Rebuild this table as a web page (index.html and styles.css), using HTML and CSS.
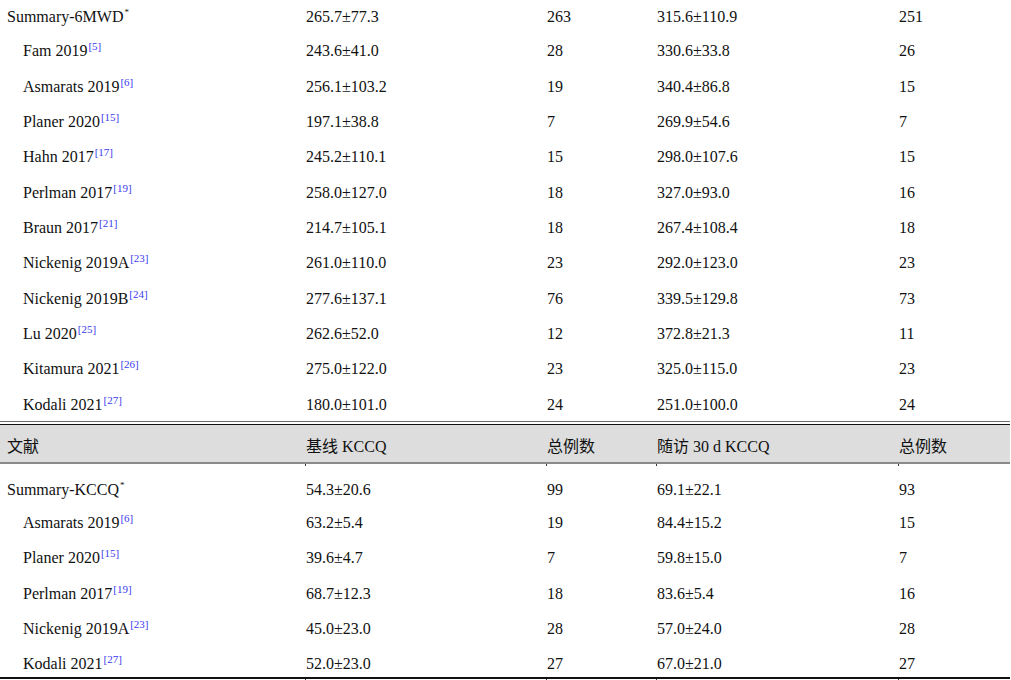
FILE: index.html
```html
<!DOCTYPE html>
<html lang="zh">
<head>
<meta charset="utf-8">
<link rel="stylesheet" href="styles.css">
</head>
<body>
<div class="page">
  <div class="section top">
    <div class="row"><div class="c1">Summary-6MWD<sup class="ast">*</sup></div><div>265.7±77.3</div><div>263</div><div>315.6±110.9</div><div>251</div></div>
    <div class="row"><div class="c1 sub">Fam 2019<sup>[5]</sup></div><div>243.6±41.0</div><div>28</div><div>330.6±33.8</div><div>26</div></div>
    <div class="row"><div class="c1 sub">Asmarats 2019<sup>[6]</sup></div><div>256.1±103.2</div><div>19</div><div>340.4±86.8</div><div>15</div></div>
    <div class="row"><div class="c1 sub">Planer 2020<sup>[15]</sup></div><div>197.1±38.8</div><div>7</div><div>269.9±54.6</div><div>7</div></div>
    <div class="row"><div class="c1 sub">Hahn 2017<sup>[17]</sup></div><div>245.2±110.1</div><div>15</div><div>298.0±107.6</div><div>15</div></div>
    <div class="row"><div class="c1 sub">Perlman 2017<sup>[19]</sup></div><div>258.0±127.0</div><div>18</div><div>327.0±93.0</div><div>16</div></div>
    <div class="row"><div class="c1 sub">Braun 2017<sup>[21]</sup></div><div>214.7±105.1</div><div>18</div><div>267.4±108.4</div><div>18</div></div>
    <div class="row"><div class="c1 sub">Nickenig 2019A<sup>[23]</sup></div><div>261.0±110.0</div><div>23</div><div>292.0±123.0</div><div>23</div></div>
    <div class="row"><div class="c1 sub">Nickenig 2019B<sup>[24]</sup></div><div>277.6±137.1</div><div>76</div><div>339.5±129.8</div><div>73</div></div>
    <div class="row"><div class="c1 sub">Lu 2020<sup>[25]</sup></div><div>262.6±52.0</div><div>12</div><div>372.8±21.3</div><div>11</div></div>
    <div class="row"><div class="c1 sub">Kitamura 2021<sup>[26]</sup></div><div>275.0±122.0</div><div>23</div><div>325.0±115.0</div><div>23</div></div>
    <div class="row"><div class="c1 sub">Kodali 2021<sup>[27]</sup></div><div>180.0±101.0</div><div>24</div><div>251.0±100.0</div><div>24</div></div>
  </div>
  <div class="section bottom">
    <div class="row head"><div class="c1">文献</div><div>基线 KCCQ</div><div>总例数</div><div>随访 30 d KCCQ</div><div>总例数</div></div>
    <div class="ticks head-ticks"><div></div><div></div><div></div><div></div><div></div></div>
    <div class="row first"><div class="c1">Summary-KCCQ<sup class="ast">*</sup></div><div>54.3±20.6</div><div>99</div><div>69.1±22.1</div><div>93</div></div>
    <div class="row"><div class="c1 sub">Asmarats 2019<sup>[6]</sup></div><div>63.2±5.4</div><div>19</div><div>84.4±15.2</div><div>15</div></div>
    <div class="row"><div class="c1 sub">Planer 2020<sup>[15]</sup></div><div>39.6±4.7</div><div>7</div><div>59.8±15.0</div><div>7</div></div>
    <div class="row"><div class="c1 sub">Perlman 2017<sup>[19]</sup></div><div>68.7±12.3</div><div>18</div><div>83.6±5.4</div><div>16</div></div>
    <div class="row"><div class="c1 sub">Nickenig 2019A<sup>[23]</sup></div><div>45.0±23.0</div><div>28</div><div>57.0±24.0</div><div>28</div></div>
    <div class="row last"><div class="c1 sub">Kodali 2021<sup>[27]</sup></div><div>52.0±23.0</div><div>27</div><div>67.0±21.0</div><div>27</div></div>
    <div class="ticks end-ticks"><div></div><div></div><div></div><div></div><div></div></div>
  </div>
</div>
</body>
</html>
```
FILE: styles.css
```css
html, body {
  margin: 0;
  padding: 0;
  background: #ffffff;
}
body {
  font-family: "Liberation Serif", "Noto Sans CJK SC", serif;
  font-size: 16px;
  color: #111111;
  overflow: hidden;
  height: 680px;
}
.page {
  width: 1010px;
}
.row, .ticks {
  display: grid;
  grid-template-columns: 305px 241px 110px 242px 112px;
}
.row > div {
  padding-left: 1px;
  white-space: nowrap;
}
.row > .c1 {
  padding-left: 7px;
}
.row > .c1.sub {
  padding-left: 23px;
}
.section.top {
  margin-top: -2px;
  border-bottom: 1px solid #6e6e6e;
}
.section.top .row {
  height: 35.33px;
  box-sizing: border-box;
  padding-top: 10px;
  line-height: 17px;
}
.section.top .row:first-child {
  height: 34.33px;
}
.section.bottom {
  margin-top: 2px;
}
.row.head {
  background: #dcdddc;
  border-top: 1px solid #111111;
  border-bottom: 2px solid #8a8a8a;
  height: 40px;
  box-sizing: border-box;
  padding-top: 13px;
  line-height: 17px;
}
.ticks {
  height: 0;
  position: relative;
}
.ticks > div {
  border-left: 1px solid #333333;
  height: 2px;
}
.ticks > div:first-child {
  border-left: none;
}
.section.bottom .row {
  box-sizing: border-box;
}
.section.bottom .row.first {
  height: 38px;
  padding-top: 17px;
  line-height: 17px;
}
.section.bottom .row:not(.head):not(.first) {
  height: 35.33px;
  padding-top: 12px;
  line-height: 17px;
}
.section.bottom .row.last {
  border-bottom: 2px solid #111111;
}
sup {
  font-size: 11px;
  line-height: 0;
  vertical-align: 6px;
  color: #3b3bf0;
  margin-left: 1px;
}
sup.ast {
  color: #111111;
  font-size: 9px;
  vertical-align: 7px;
}
```
